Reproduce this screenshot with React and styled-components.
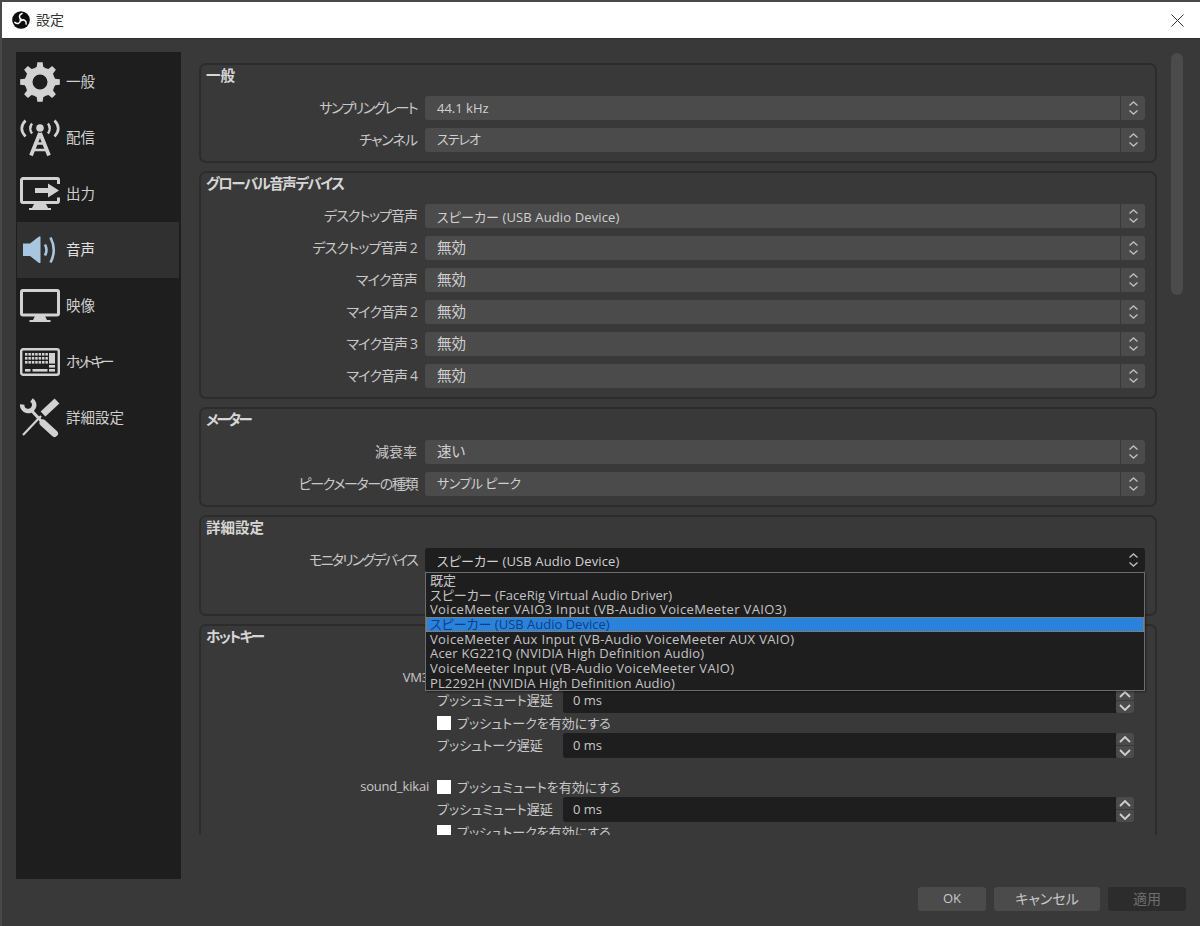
import React from 'react';
import styled, { createGlobalStyle } from 'styled-components';

const FONT = '"Open Sans", "Noto Sans CJK JP", sans-serif';

const Global = createGlobalStyle`
  html, body { margin: 0; padding: 0; background: #3a393a; }
  * { box-sizing: border-box; }
  body { font-family: ${FONT}; font-size: 13px; font-feature-settings: "palt"; color: #c8c8c8; }
`;

const Window = styled.div`
  width: 1200px; height: 926px; display: flex; flex-direction: column;
  background: #3a393a; border-left: 2px solid #4a494a; border-top: 2px solid #4a494a; overflow: hidden;
`;
const TitleBar = styled.header`
  height: 37px; flex: none; background: #fff; display: flex; align-items: center;
  padding: 0 16px 0 10px; border-bottom: 1px solid #2f2f2f;
`;
const TitleText = styled.span`
  margin-left: 6px; font-size: 14px; color: #333; flex: 1; padding-bottom: 2px;
`;
const Body = styled.div`
  flex: 1; display: flex; min-height: 0; padding: 13px 14px 0 14px; gap: 4px;
`;
const Sidebar = styled.nav`
  width: 165px; height: 827px; flex: none; background: #1e1e1e; padding: 2px 1px 0;
`;
const NavItem = styled.div`
  height: 56px; display: flex; align-items: center; gap: 6px; padding-left: 3px;
  background: ${p => (p.$active ? '#303030' : 'transparent')};
  margin-right: 1px;
  svg { flex: none; width: 40px; }
`;
const NavLabel = styled.span`
  font-size: 14.5px; padding-bottom: 3px; white-space: nowrap;
  letter-spacing: ${p => p.$track || 0}px;
  color: ${p => (p.$active ? '#e0e0e0' : '#cfcfcf')};
`;
const Main = styled.div`
  flex: 1; min-width: 0; display: flex; flex-direction: column;
`;
const ScrollRow = styled.div`
  height: 783px; display: flex; gap: 4px; flex: none;
`;
const Viewport = styled.div`
  width: 982px; height: 783px; overflow: hidden; padding: 11px 10px 0 14px;
  display: flex; flex-direction: column; gap: 8px;
`;
const ScrollTrack = styled.div`
  width: 12px; padding-top: 1px;
`;
const ScrollThumb = styled.div`
  width: 12px; height: 242px; background: #4c4b4c; border-radius: 6px;
`;
const Group = styled.section`
  flex: none; border: 2px solid #2d2c2d; border-radius: 7px;
  padding: 2px 10px ${p => p.$bottom || 9}px 0;
`;
const GroupTitle = styled.h3`
  margin: 0 0 13px 5px; height: 16px; line-height: 18px; font-size: 14.5px; font-weight: 700; color: #d6d6d6;
  letter-spacing: ${p => p.$track || 0}px; white-space: nowrap;
`;
const Rows = styled.div`
  display: flex; flex-direction: column; gap: 8px;
`;
const FormRow = styled.div`
  display: grid; grid-template-columns: 216px 1fr; column-gap: 8px; align-items: center; height: 24px;
`;
const Label = styled.label`
  text-align: right; color: #c8c8c8; white-space: nowrap; font-size: 14px; padding-bottom: 3px;
  letter-spacing: ${p => p.$track || 0}px;
`;
const Select = styled.div`
  position: relative; display: flex; height: 24px; gap: ${p => (p.$open ? 0 : 1)}px;
  background: ${p => (p.$open ? '#1f1e1f' : 'transparent')}; border-radius: 3px;
`;
const SelectValue = styled.div`
  flex: 1; display: flex; align-items: center; color: #d0d0d0; padding-left: 12px;
  padding-bottom: ${p => p.$lift || 0}px;
  font-size: ${p => p.$size || 13}px;
  letter-spacing: ${p => p.$track || 0}px;
  background: ${p => (p.$open ? 'transparent' : '#4c4b4c')}; border-radius: 3px 0 0 3px;
`;
const SelectArrows = styled.div`
  width: 24px; display: flex; align-items: center; justify-content: center;
  background: ${p => (p.$open ? 'transparent' : '#4c4b4c')}; border-radius: 0 3px 3px 0;
`;
const Popup = styled.ul`
  position: absolute; z-index: 5; top: 24px; left: 0; right: 0; height: 119px; margin: 0;
  list-style: none; padding: 0; background: #1f1e1f; border: 1px solid #6c6d72;
  box-shadow: 1px 1px 2px rgba(0, 0, 0, 0.4);
`;
const PopupItem = styled.li`
  height: 14.67px; line-height: 14px; padding-left: 4px; white-space: nowrap; font-size: 13px;
  letter-spacing: ${p => p.$track || 0}px;
  color: ${p => (p.$selected ? '#0e3f86' : '#c4c4c4')};
  background: ${p => (p.$selected ? '#2a82da' : 'transparent')};
  outline: ${p => (p.$selected ? '1px dotted #c77a1e' : 'none')};
  outline-offset: -1px;
`;
const HotkeyList = styled.div`
  margin-top: 26px; display: flex; flex-direction: column; gap: 21px;
`;
const HotkeyBlock = styled.div`
  display: grid; grid-template-columns: 228px 1fr; column-gap: 8px; align-items: start;
`;
const HotkeyName = styled.div`
  text-align: right; height: 16px; line-height: 15px; color: #c8c8c8; letter-spacing: -0.2px;
`;
const HotkeyFields = styled.div`
  display: flex; flex-direction: column; gap: 2px; padding-right: 11px;
`;
const CheckRow = styled.div`
  display: flex; align-items: center; gap: 6px; height: 16px; color: #c8c8c8;
`;
const CheckText = styled.span`
  padding-bottom: 2px; white-space: nowrap;
`;
const CheckBox = styled.span`
  width: 14px; height: 14px; background: #fff; flex: none;
`;
const DelayRow = styled.div`
  display: flex; align-items: center; height: 25px;
`;
const DelayLabel = styled.span`
  width: 126px; flex: none; white-space: nowrap; color: #c8c8c8; padding-bottom: 3px;
`;
const NumberInput = styled.div`
  flex: 1; height: 25px; background: #1f1e1f; border-radius: 3px 0 0 3px; display: flex; align-items: center;
  padding: 0 0 2px 10px; color: #c8c8c8;
`;
const Spin = styled.div`
  width: 18px; height: 25px; display: flex; flex-direction: column; gap: 1px;
`;
const SpinButton = styled.div`
  flex: 1; background: #4c4b4c; border-radius: ${p => (p.$up ? '3px 3px 0 0' : '0 0 3px 3px')};
  display: flex; align-items: center; justify-content: center;
`;
const Footer = styled.footer`
  flex: none; display: flex; justify-content: flex-end; gap: 8px; padding: 52px 0 0;
`;
const Button = styled.button`
  height: 24px; width: ${p => p.$w}px; border: 0; border-radius: 3px; font: inherit;
  font-feature-settings: "palt";
  font-size: ${p => p.$size || 13}px;
  background: ${p => (p.$disabled ? '#2d2c2d' : '#4c4b4c')};
  color: ${p => (p.$disabled ? '#6e6e6e' : '#c8c8c8')};
  padding: 0 0 2px;
`;

const gearPath = () => {
  const pts = [];
  const teeth = 8;
  for (let i = 0; i < teeth; i++) {
    const a = (i / teeth) * Math.PI * 2;
    const step = (Math.PI * 2) / teeth;
    [[-0.5, 15], [-0.27, 15.5], [-0.17, 20], [0.17, 20], [0.27, 15.5], [0.5, 15]].forEach(([f, r]) => {
      const t = a + f * step - Math.PI / 2;
      pts.push(`${(20 + r * Math.cos(t)).toFixed(2)} ${(20 + r * Math.sin(t)).toFixed(2)}`);
    });
  }
  return `M${pts.join('L')}Z M27.5 20a7.5 7.5 0 1 0-15 0a7.5 7.5 0 1 0 15 0Z`;
};

const ICON = '#d2d2d2';

const GearIcon = () => (
  <svg width="40" height="40" viewBox="0 0 40 40"><path d={gearPath()} fill={ICON} fillRule="evenodd" /></svg>
);
const AntennaIcon = () => (
  <svg width="40" height="38" viewBox="0 0 40 38" fill="none" stroke={ICON}>
    <circle cx="20" cy="9" r="3.800" fill={ICON} stroke="none" />
    <path d="M12 4.500q-3.500 5 0 10M28 4.500q3.500 5 0 10" strokeWidth="2.400" />
    <path d="M5.500 1.500q-7.500 8 0 16M34.500 1.500q7.500 8 0 16" strokeWidth="2.600" />
    <path d="M20 14L11 36.500M20 14L29 36.500" strokeWidth="3.800" />
    <path d="M15 24.500h10M13 31h14" strokeWidth="2.400" />
  </svg>
);
const MonitorArrowIcon = () => (
  <svg width="40" height="34" viewBox="0 0 40 34" fill="none">
    <path d="M38.500 7V3a1.500 1.500 0 0 0-1.500-1.500H3A1.500 1.500 0 0 0 1.500 3v21A1.500 1.500 0 0 0 3 25.500h34a1.500 1.500 0 0 0 1.500-1.500V20.500" stroke={ICON} strokeWidth="3" />
    <path d="M14 27h12l2 4h3v2H9v-2h3z" fill={ICON} />
    <path d="M15 11h13V6.500L39 13.500 28 20.500V16H15z" fill={ICON} />
  </svg>
);
const SpeakerIcon = () => (
  <svg width="40" height="30" viewBox="0 0 40 30" fill="none">
    <path d="M3 8.500h7L19 1.500h1.500v26.500H19L10 21H3z" fill="#a9c6e0" />
    <path d="M25 9.500q3 5.500 0 11" stroke="#a9c6e0" strokeWidth="2.600" />
    <path d="M30.500 2.500q6.500 12.500 0 25" stroke="#a9c6e0" strokeWidth="2.600" />
  </svg>
);
const MonitorIcon = () => (
  <svg width="40" height="34" viewBox="0 0 40 34" fill="none">
    <rect x="1.500" y="1.500" width="37" height="24.500" rx="1.500" stroke={ICON} strokeWidth="3" />
    <path d="M15 27h10l2 4h3.500v2H9.500v-2H13z" fill={ICON} />
  </svg>
);
const keyRows = [
  [5, 8.4, 11.8, 15.2, 18.6, 22, 25.4],
  [5, 8.4, 11.8, 15.2, 18.6, 22, 25.4],
  [5, 8.4, 11.8, 15.2, 18.6, 22, 25.4],
];
const KeyboardIcon = () => (
  <svg width="40" height="28" viewBox="0 0 40 28" fill="none">
    <rect x="1.200" y="1.200" width="37.600" height="25.600" rx="2" stroke={ICON} strokeWidth="2.400" />
    {keyRows.map((r, j) => r.map(x => (
      <rect key={`${j}-${x}`} x={x} y={5 + j * 4} width="2.500" height="2.600" fill={ICON} />
    )))}
    <rect x="29" y="5" width="6" height="10.600" fill={ICON} />
    <rect x="29" y="17" width="6" height="2.600" fill={ICON} />
    <rect x="5" y="21" width="5.500" height="2.600" fill={ICON} />
    <rect x="12.500" y="21" width="15" height="2.600" fill={ICON} />
    <rect x="29" y="21" width="6" height="2.600" fill={ICON} />
  </svg>
);
const ToolsIcon = () => (
  <svg width="40" height="40" viewBox="0 0 40 40" fill="none" stroke={ICON}>
    <path d="M2.200 6.500A6 6 0 1 0 11.500 2" strokeWidth="4.500" />
    <path d="M12 13L23 25" strokeWidth="3" />
    <path d="M23 25L34.500 35.500" strokeWidth="7" strokeLinecap="round" />
    <path d="M37 3L23 16" strokeWidth="7" />
    <path d="M21 18L3 37" strokeWidth="2.200" />
  </svg>
);
const ObsLogo = () => (
  <svg width="18" height="18" viewBox="0 0 18 18" fill="none">
    <circle cx="9" cy="9" r="8.800" fill="#0c0c0c" />
    {[0, 120, 240].map(a => (
      <path key={a} transform={`rotate(${a} 9 9)`} d="M9.500 8.500C6.800 7.500 6.500 3.800 10 2.500" stroke="#fff" strokeWidth="1.500" strokeLinecap="round" />
    ))}
  </svg>
);
const CloseIcon = () => (
  <svg width="13" height="13" viewBox="0 0 13 13" stroke="#333" strokeWidth="1"><path d="M.5.5l12 12M12.500.5l-12 12" /></svg>
);
const UpDown = () => (
  <svg width="11" height="16" viewBox="0 0 11 16" fill="none" stroke="#bdbdbd" strokeWidth="1.400">
    <path d="M1.500 5.500L5.500 2l4 3.500M1.500 10.500L5.500 14l4-3.500" />
  </svg>
);
const Chevron = ({ up }) => (
  <svg width="12" height="7" viewBox="0 0 12 7" fill="none" stroke="#cfcfcf" strokeWidth="1.800">
    <path d={up ? 'M1 6l5-5 5 5' : 'M1 1l5 5 5-5'} />
  </svg>
);

const nav = [
  ['一般', GearIcon], ['配信', AntennaIcon], ['出力', MonitorArrowIcon], ['音声', SpeakerIcon],
  ['映像', MonitorIcon], ['ホットキー', KeyboardIcon, -4], ['詳細設定', ToolsIcon],
];
const popupItems = [
  ['既定', 0],
  ['スピーカー (FaceRig Virtual Audio Driver)', 0.05],
  ['VoiceMeeter VAIO3 Input (VB-Audio VoiceMeeter VAIO3)', 0.35],
  ['スピーカー (USB Audio Device)', 0],
  ['VoiceMeeter Aux Input (VB-Audio VoiceMeeter AUX VAIO)', 0.36],
  ['Acer KG221Q (NVIDIA High Definition Audio)', 0.19],
  ['VoiceMeeter Input (VB-Audio VoiceMeeter VAIO)', 0.31],
  ['PL2292H (NVIDIA High Definition Audio)', 0.13],
];

const Field = ({ label, labelTrack, value, size, track, lift, open }) => (
  <FormRow>
    <Label $track={labelTrack}>{label}</Label>
    <Select $open={open}>
      <SelectValue $open={open} $size={size} $track={track} $lift={lift}>{value}</SelectValue>
      <SelectArrows $open={open}><UpDown /></SelectArrows>
      {open && (
        <Popup>
          {popupItems.map(([t, tr], i) => <PopupItem key={t} $track={tr} $selected={i === 3}>{t}</PopupItem>)}
        </Popup>
      )}
    </Select>
  </FormRow>
);

const Delay = ({ label }) => (
  <DelayRow>
    <DelayLabel>{label}</DelayLabel>
    <NumberInput>0 ms</NumberInput>
    <Spin>
      <SpinButton $up><Chevron up /></SpinButton>
      <SpinButton><Chevron /></SpinButton>
    </Spin>
  </DelayRow>
);

const Hotkey = ({ name }) => (
  <HotkeyBlock>
    <HotkeyName>{name}</HotkeyName>
    <HotkeyFields>
      <CheckRow><CheckBox /><CheckText>プッシュミュートを有効にする</CheckText></CheckRow>
      <Delay label="プッシュミュート遅延" />
      <CheckRow><CheckBox /><CheckText>プッシュトークを有効にする</CheckText></CheckRow>
      <Delay label="プッシュトーク遅延" />
    </HotkeyFields>
  </HotkeyBlock>
);

const Disabled = { value: '無効', size: 14.5, lift: 3 };

export default function App() {
  return (
    <Window>
      <Global />
      <TitleBar>
        <ObsLogo />
        <TitleText>設定</TitleText>
        <CloseIcon />
      </TitleBar>
      <Body>
        <Sidebar>
          {nav.map(([t, Icon, tr]) => (
            <NavItem key={t} $active={t === '音声'}>
              <Icon />
              <NavLabel $active={t === '音声'} $track={tr}>{t}</NavLabel>
            </NavItem>
          ))}
        </Sidebar>
        <Main>
          <ScrollRow>
            <Viewport>
              <Group>
                <GroupTitle>一般</GroupTitle>
                <Rows>
                  <Field label="サンプリングレート" labelTrack={-1.55} value="44.1 kHz" />
                  <Field label="チャンネル" labelTrack={-1} value="ステレオ" track={-1} lift={3} />
                </Rows>
              </Group>
              <Group>
                <GroupTitle $track={-1.5}>グローバル音声デバイス</GroupTitle>
                <Rows>
                  <Field label="デスクトップ音声" labelTrack={-1} value="スピーカー (USB Audio Device)" track={0.12} />
                  <Field label="デスクトップ音声 2" labelTrack={-0.8} {...Disabled} />
                  <Field label="マイク音声" labelTrack={-0.8} {...Disabled} />
                  <Field label="マイク音声 2" labelTrack={-0.9} {...Disabled} />
                  <Field label="マイク音声 3" labelTrack={-0.9} {...Disabled} />
                  <Field label="マイク音声 4" labelTrack={-0.9} {...Disabled} />
                </Rows>
              </Group>
              <Group>
                <GroupTitle $track={-2.5}>メーター</GroupTitle>
                <Rows>
                  <Field label="減衰率" value="速い" size={14.5} lift={3} />
                  <Field label="ピークメーターの種類" labelTrack={-1.4} value="サンプル ピーク" track={-0.5} lift={3} />
                </Rows>
              </Group>
              <Group $bottom={42}>
                <GroupTitle>詳細設定</GroupTitle>
                <Rows>
                  <Field label="モニタリングデバイス" labelTrack={-1.8} value="スピーカー (USB Audio Device)" track={0.12} open />
                </Rows>
              </Group>
              <Group $bottom={20}>
                <GroupTitle $track={-1.8}>ホットキー</GroupTitle>
                <HotkeyList>
                  <Hotkey name="VM3" />
                  <Hotkey name="sound_kikai" />
                </HotkeyList>
              </Group>
            </Viewport>
            <ScrollTrack><ScrollThumb /></ScrollTrack>
          </ScrollRow>
          <Footer>
            <Button $w={68}>OK</Button>
            <Button $w={106} $size={14}>キャンセル</Button>
            <Button $w={78} $disabled $size={14}>適用</Button>
          </Footer>
        </Main>
      </Body>
    </Window>
  );
}
